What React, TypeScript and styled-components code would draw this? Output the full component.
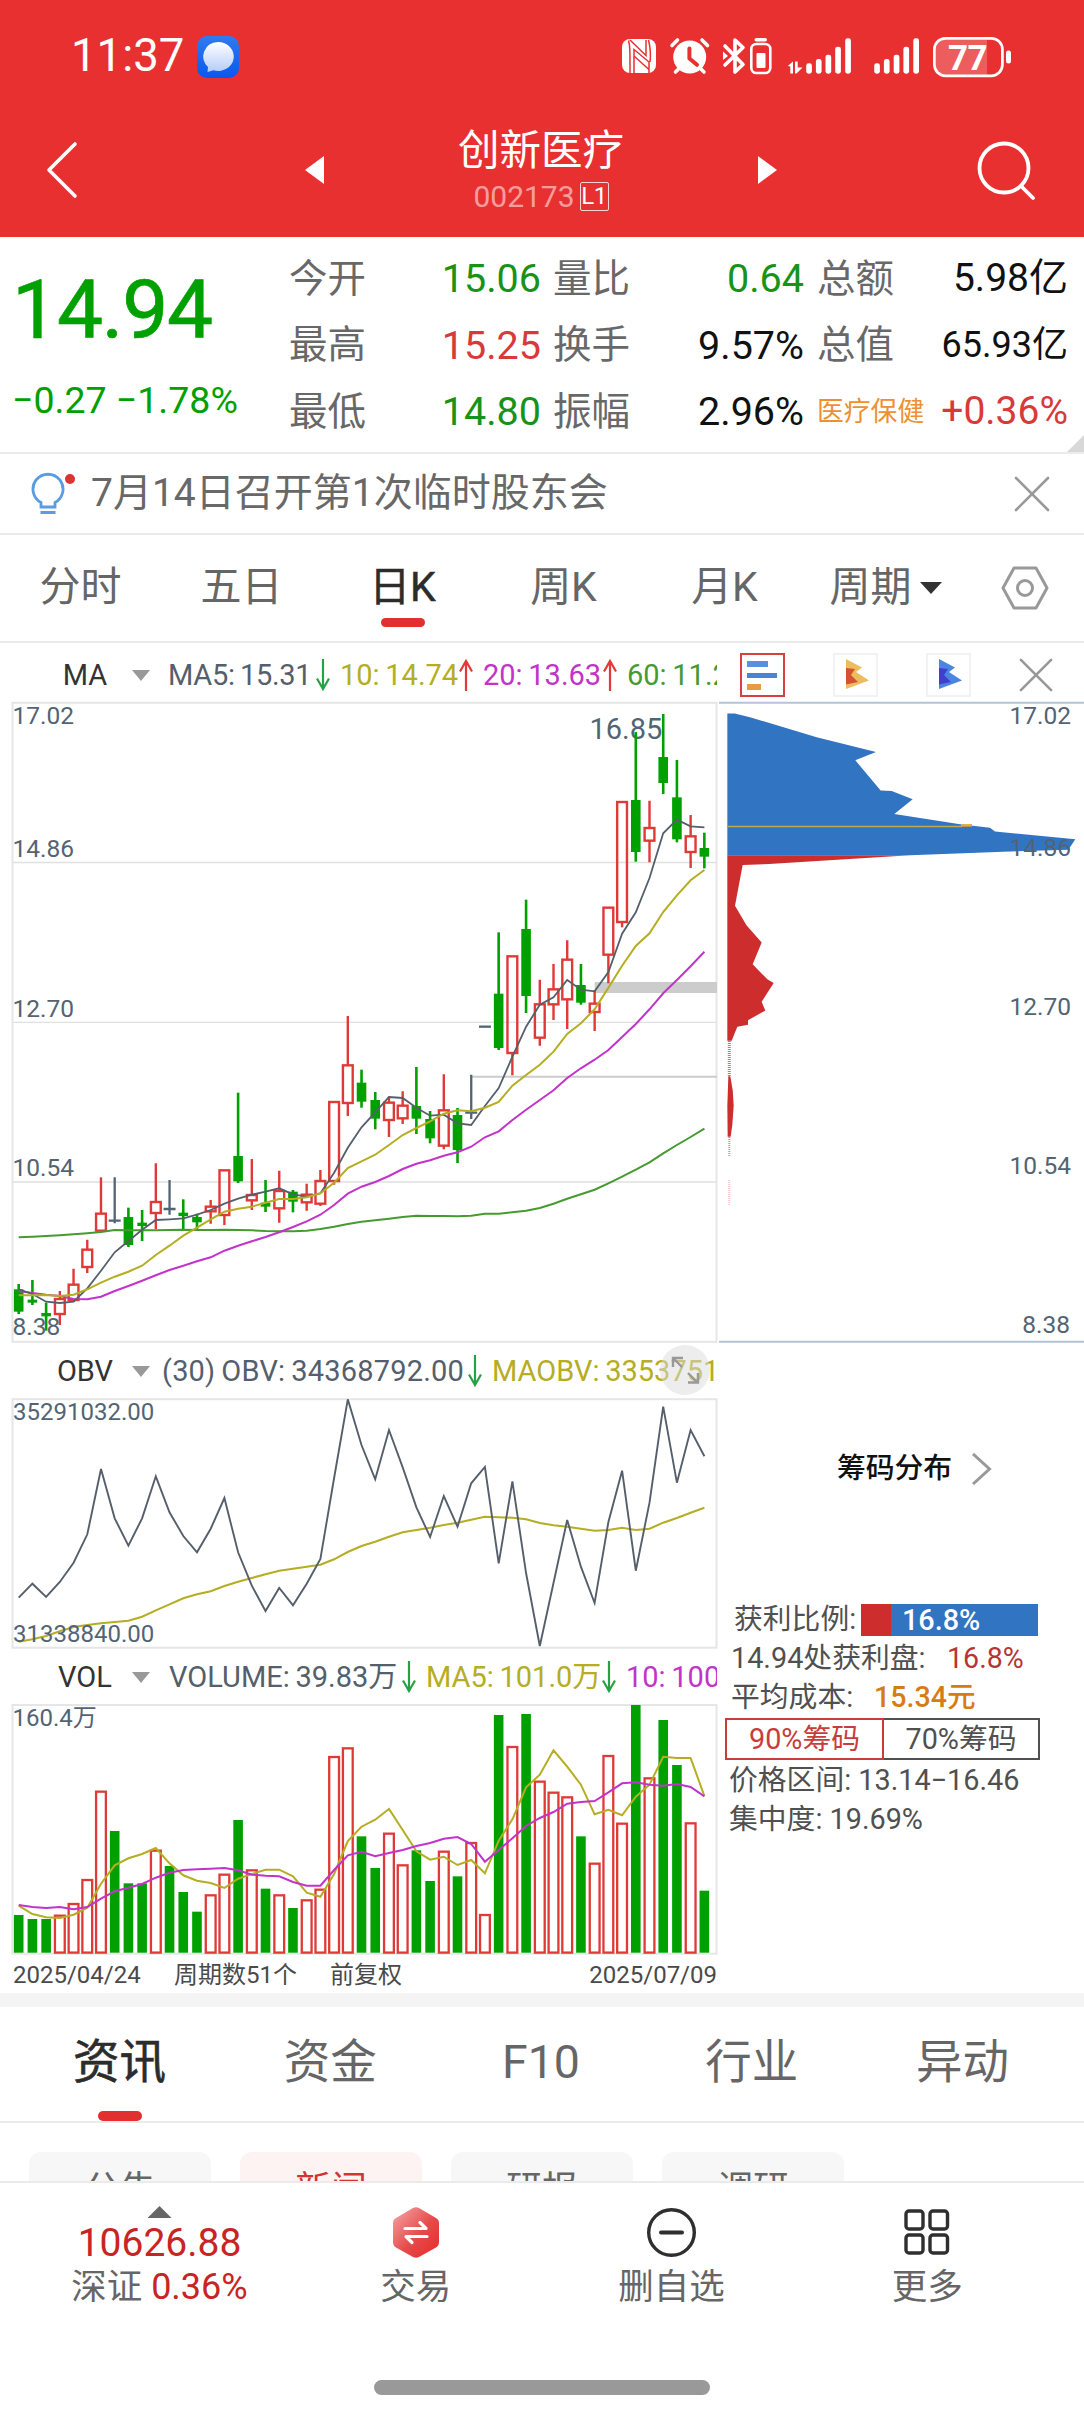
import React from "react";
import styled, { createGlobalStyle, css } from "styled-components";

const C = {
  red: "#e83030",
  up: "#e03a36",
  down: "#00a000",
  slate: "#555f6b",
  axis: "#526474",
  olive: "#b5ad22",
  magenta: "#c233cb",
  green: "#479a30",
  line: "#ebebeb",
  gray: "#666",
};

const FONT = `Roboto, "Noto Sans CJK SC", sans-serif`;

const Global = createGlobalStyle`
  * { box-sizing: border-box; }
  body { margin: 0; background: #fff; font-family: ${FONT}; line-height: 1.2; }
  svg { display: block; flex: none; }
`;

const Page = styled.div`
  width: 1084px;
  height: 2412px;
  display: flex;
  flex-direction: column;
  overflow: hidden;
  background: #fff;
`;

const Text = styled.span<{ $s: number; $c?: string; $w?: number; $ls?: number }>`
  font-size: ${(p) => p.$s}px;
  color: ${(p) => p.$c ?? "inherit"};
  font-weight: ${(p) => p.$w ?? 400};
  letter-spacing: ${(p) => p.$ls ?? 0}px;
  line-height: 1.2;
  white-space: pre;
`;

/* ---------- red top area ---------- */
const Top = styled.header`
  height: 237px;
  background: ${C.red};
  color: #fff;
  flex: none;
`;
const StatusBar = styled.div`
  height: 113px;
  padding: 0 73px 0 71px;
  display: flex;
  align-items: center;
  justify-content: space-between;
`;
const Clock = styled.div`
  display: flex;
  align-items: center;
  gap: 13px;
`;
const TitleBar = styled.div`
  height: 124px;
  display: flex;
  align-items: center;
  padding: 0 48px 10px 46px;
`;
const Title = styled.div`
  width: 434px;
  display: flex;
  flex-direction: column;
  align-items: center;
`;
const CodeRow = styled.div`
  display: flex;
  align-items: center;
  gap: 5px;
  height: 34px;
  margin-top: 4px;
`;
const LevelTag = styled.span`
  width: 29px;
  height: 29px;
  border: 1.5px solid rgba(255, 255, 255, 0.8);
  border-radius: 2px;
  font-size: 24px;
  line-height: 27px;
  text-align: center;
  letter-spacing: -0.5px;
`;
const Previous = styled.div`
  flex: none;
  margin-left: 227px;
`;
const Search = styled.div`
  margin-left: auto;
`;

/* ---------- quote ---------- */
const Quote = styled.section`
  height: 217px;
  flex: none;
  display: flex;
  position: relative;
  border-bottom: 2px solid ${C.line};
`;
const PriceBox = styled.div`
  width: 289px;
  padding: 25px 0 0 12px;
  color: ${C.down};
`;
const BigPrice = styled.div`
  font-size: 82px;
  line-height: 96px;
  letter-spacing: -1.2px;
  -webkit-text-stroke: 0.7px ${C.down};
`;
const Change = styled.div`
  margin-top: 20px;
  font-size: 37.5px;
  line-height: 44px;
  white-space: pre;
`;
const Stats = styled.div`
  display: grid;
  grid-template-columns: 77px 175px 12px 77px 174px 13px 108px 143px;
  grid-template-rows: repeat(3, 66.5px);
  align-items: center;
  padding-top: 8px;
`;
const Label = styled.span<{ $s?: number; $c?: string; $col: number; $up?: number }>`
  grid-column: ${(p) => p.$col};
  font-size: ${(p) => p.$s ?? 38.5}px;
  color: ${(p) => p.$c ?? "#686868"};
  line-height: 1.2;
  padding-top: 1px;
  white-space: nowrap;
`;
const Value = styled(Label)`
  justify-self: end;
`;
const Corner = styled.i`
  position: absolute;
  right: 0;
  bottom: 0;
  border-style: solid;
  border-width: 0 0 17px 17px;
  border-color: transparent transparent #d8d8d8 transparent;
`;

/* ---------- notice and period tabs ---------- */
const Notice = styled.section`
  height: 81px;
  flex: none;
  border-bottom: 2px solid ${C.line};
  display: flex;
  align-items: center;
  padding: 0 34px 0 30px;
`;
const NoticeText = styled.div`
  flex: 1;
  margin-left: 12px;
  font-size: 39px;
  color: #686868;
`;
const Periods = styled.nav`
  height: 108px;
  flex: none;
  display: grid;
  grid-template-columns: repeat(6, 161px) 1fr;
  border-bottom: 2px solid ${C.line};
`;
const Period = styled.div<{ $on?: boolean }>`
  display: flex;
  align-items: center;
  justify-content: center;
  position: relative;
  font-size: 41px;
  color: ${(p) => (p.$on ? "#2c2c2c" : C.gray)};
  ${(p) =>
    p.$on &&
    css`
      -webkit-text-stroke: 0.5px #2c2c2c;
      &::after {
        content: "";
        position: absolute;
        left: 59px;
        bottom: 14px;
        width: 44px;
        height: 9px;
        border-radius: 5px;
        background: #e23030;
      }
    `}
`;
const Caret = styled.i<{ $w: number; $h: number; $c: string; $ml?: number }>`
  width: 0;
  height: 0;
  margin-left: ${(p) => p.$ml ?? 0}px;
  border-style: solid;
  border-width: ${(p) => p.$h}px ${(p) => p.$w / 2}px 0;
  border-color: ${(p) => p.$c} transparent transparent;
`;

/* ---------- charts ---------- */
const ChartArea = styled.section`
  display: flex;
  height: 1350px;
  flex: none;
`;
const Left = styled.div`
  width: 719px;
  display: flex;
  flex-direction: column;
`;
const Right = styled.div`
  width: 365px;
  display: flex;
  flex-direction: column;
`;
const IndicatorRow = styled.div<{ $h: number; $pt?: number }>`
  height: ${(p) => p.$h}px;
  padding-top: ${(p) => p.$pt ?? 0}px;
  width: 717px;
  display: flex;
  align-items: center;
  overflow: hidden;
  position: relative;
  flex: none;
`;
const IndicatorName = styled.span`
  width: 80px;
  margin: 0 7px 0 45px;
  text-align: center;
  font-size: 29px;
  color: #333;
  flex: none;
`;
const Item = styled.span<{ $c: string; $w: number; $ls?: number; $pl?: number }>`
  width: ${(p) => p.$w}px;
  flex: none;
  display: flex;
  align-items: center;
  justify-content: space-between;
  padding: 0 10px 0 ${(p) => p.$pl ?? 0}px;
  color: ${(p) => p.$c};
  font-size: 29px;
  word-spacing: -1.5px;
  letter-spacing: ${(p) => p.$ls ?? 0}px;
  white-space: pre;
`;
const Expand = styled.div`
  position: absolute;
  left: 660px;
  top: 3px;
  width: 50px;
  height: 50px;
  border-radius: 50%;
  background: rgba(220, 220, 220, 0.5);
`;
const Dates = styled.div`
  height: 39px;
  padding: 4px 2px 0 13px;
  display: grid;
  grid-template-columns: 161px 156px 1fr auto;
  align-items: center;
  font-size: 24px;
  color: #4a4a4a;
`;

const ToolRow = styled.div`
  height: 58px;
  display: flex;
  align-items: center;
  padding: 6px 0 0 21px;
  flex: none;
`;
const Tool = styled.div<{ $on?: boolean }>`
  width: 45px;
  height: 44px;
  margin-right: 48px;
  border: 2px solid ${(p) => (p.$on ? "#d84040" : "#f2f2f2")};
  flex: none;
`;
const ChipTitle = styled.div`
  height: 250px;
  display: flex;
  align-items: center;
  justify-content: center;
  gap: 20px;
  font-size: 28.8px;
  font-weight: 500;
  color: #111;
  padding: 3px 0 0 26px;
`;
const ChipInfo = styled.div`
  display: flex;
  flex-direction: column;
  padding: 8px 0 0 6px;
  font-size: 28.8px;
  color: #505050;
`;
const InfoRow = styled.div<{ $pl?: number }>`
  height: 39px;
  padding-left: ${(p) => p.$pl ?? 6}px;
  display: flex;
  align-items: center;
  white-space: pre;
`;
const InfoLabel = styled.span<{ $w: number }>`
  width: ${(p) => p.$w}px;
`;
const Ratio = styled.div`
  width: 177px;
  height: 32px;
  background: linear-gradient(90deg, #cd2d2d 30px, #3174c2 30px);
  color: #fff;
  font-weight: 500;
  line-height: 32px;
  padding-left: 41px;
`;
const Segments = styled.div`
  display: flex;
  height: 42px;
  margin: 1px 0 1px;
`;
const Segment = styled.div<{ $on?: boolean }>`
  width: ${(p) => (p.$on ? 159 : 156)}px;
  border: 2px solid ${(p) => (p.$on ? "#c93c3c" : "#505050")};
  border-left-width: ${(p) => (p.$on ? 2 : 0)}px;
  color: ${(p) => (p.$on ? "#c93c3c" : "#505050")};
  display: flex;
  align-items: center;
  justify-content: center;
`;

/* ---------- lower tabs ---------- */
const Strip = styled.div`
  height: 14px;
  flex: none;
  background: #f4f4f4;
`;
const Tabs = styled.nav`
  height: 116px;
  flex: none;
  padding: 0 16px 0 14px;
  display: grid;
  grid-template-columns: repeat(5, 1fr);
  border-bottom: 2px solid ${C.line};
`;
const Tab = styled.div<{ $on?: boolean }>`
  position: relative;
  text-align: center;
  line-height: 111px;
  font-size: 46.5px;
  color: ${(p) => (p.$on ? "#2c2c2c" : C.gray)};
  ${(p) =>
    p.$on &&
    css`
      -webkit-text-stroke: 0.6px #2c2c2c;
      &::after {
        content: "";
        position: absolute;
        left: 84px;
        bottom: 0;
        width: 44px;
        height: 10px;
        border-radius: 5px;
        background: #e23030;
      }
    `}
`;
const Pills = styled.div`
  height: 58px;
  flex: none;
  padding: 29px 29px 0;
  display: flex;
  gap: 29px;
  overflow: hidden;
`;
const Pill = styled.div<{ $on?: boolean }>`
  width: 182px;
  height: 74px;
  line-height: 76px;
  border-radius: 12px;
  text-align: center;
  font-size: 36px;
  background: ${(p) => (p.$on ? "#fdf3f2" : "#f7f7f7")};
  color: ${(p) => (p.$on ? "#d03434" : C.gray)};
`;
const BottomNav = styled.footer`
  height: 232px;
  flex: none;
  border-top: 2px solid ${C.line};
  display: flex;
  flex-direction: column;
  background: #fff;
`;
const NavItems = styled.div`
  height: 197px;
  padding: 23px 29px 0 31px;
  display: grid;
  grid-template-columns: 257px repeat(3, 1fr);
`;
const NavItem = styled.div`
  display: flex;
  flex-direction: column;
  align-items: center;
  font-size: 35.5px;
  color: ${C.gray};
`;
const NavIcon = styled.div`
  height: 52px;
  margin-bottom: 8px;
  display: flex;
  align-items: center;
`;
const UpMark = styled.i`
  width: 24px;
  height: 12px;
  background: #666;
  clip-path: polygon(50% 0, 100% 100%, 0 100%);
`;
const IndexValue = styled.div`
  margin-top: 2px;
  font-size: 39px;
  line-height: 46px;
  color: #c92424;
`;
const NavLabel = styled.div`
  line-height: 42px;
  white-space: pre;
`;
const HomeBar = styled.div`
  width: 336px;
  height: 15px;
  border-radius: 8px;
  background: #999;
  margin: 0 auto;
`;

/* ---------- data ---------- */
type Kind = "r" | "g" | "n";
type Candle = [Kind, number, number, number, number];
const X = (i: number) => 18.7 + i * 13.713;

const block = (base: number, rows: Candle[]): Candle[] =>
  rows.map(([k, ...v]) => [k, ...v.map((n) => base + n / 3)] as Candle);

const candles: Candle[] = [
  ...block(990, [
    ["g", 882, 898, 965, 972], ["g", 870, 929, 938, 945], ["g", 938, 969, 979, 1022],
    ["r", 903, 927, 972, 1005], ["r", 836, 884, 930, 936], ["r", 749, 779, 831, 849],
    ["r", 562, 671, 722, 722], ["n", 562, 692, 692, 700], ["g", 653, 681, 765, 771],
    ["g", 660, 698, 708, 753], ["r", 520, 636, 669, 717], ["n", 570, 657, 657, 674],
    ["g", 628, 668, 678, 722], ["g", 671, 681, 697, 722], ["r", 630, 650, 664, 701],
    ["r", 541, 541, 675, 705], ["g", 308, 498, 574, 579], ["r", 507, 615, 631, 660],
    ["g", 570, 638, 650, 666], ["r", 542, 603, 655, 698], ["g", 600, 605, 635, 667],
    ["r", 581, 614, 637, 662], ["r", 540, 573, 641, 648], ["r", 336, 336, 573, 584],
    ["r", 78, 226, 339, 378], ["g", 239, 278, 335, 353],
  ]),
  ...block(1000, [
    ["g", 276, 300, 356, 388], ["r", 290, 308, 360, 411], ["r", 274, 317, 355, 372],
    ["g", 201, 318, 356, 402], ["g", 333, 357, 415, 430], ["r", 223, 331, 437, 448],
    ["g", 324, 345, 450, 489], ["n", 224, 338, 338, 357], ["n", 80, 80, 80, 80],
  ]),
  ...block(690, [
    ["g", 727, 911, 1074, 1080], ["r", 799, 799, 1089, 1156], ["g", 629, 717, 918, 969],
    ["r", 869, 943, 1043, 1067], ["r", 822, 898, 943, 990], ["r", 751, 809, 928, 1017],
    ["g", 822, 885, 938, 944], ["r", 900, 941, 966, 1023], ["r", 653, 653, 794, 880],
    ["r", 336, 336, 696, 712], ["g", 126, 330, 486, 515], ["r", 332, 414, 452, 517],
    ["g", 72, 201, 279, 312], ["g", 210, 322, 448, 457], ["r", 375, 439, 486, 534],
    ["g", 428, 474, 500, 535],
  ]),
];

const seg = (base: number, v: number[]) => v.map((n) => base + n / 3);
const ma5 = [
  ...seg(990, [898, 912, 935, 939, 935, 895, 842, 787, 753, 719, 690, 688, 685, 674, 660, 641, 626, 614, 605, 595, 613, 620, 610, 548, 473, 412]),
  ...seg(1000, [337, 291, 294, 323, 347, 344, 370, 375, 318, 264]),
  ...seg(690, [1100, 1010, 944, 922, 870, 899, 904, 846, 731, 667, 564, 430, 389, 409, 412]),
];
const ma10 = [
  ...seg(990, [916, 916, 915, 918, 914, 898, 878, 860, 845, 827, 795, 767, 737, 713, 688, 665, 656, 650, 638, 627, 627, 622, 610, 578]),
  ...seg(1000, [504, 484, 464, 435, 405, 384, 364, 341, 331, 334, 323, 306, 257]),
  ...seg(690, [1155, 1124, 1085, 1032, 1000, 958, 893, 827, 768, 730, 666, 616, 571, 540]),
];
const ma20 = [
  ...seg(990, [903, 909, 914, 918, 927, 928, 920, 903, 888, 872, 856, 840, 827, 814, 802, 782, 767, 754, 741, 727, 711, 694, 674, 645]),
  ...seg(1000, [581, 560, 546, 528, 507, 491, 481, 467, 457, 440, 412, 394, 360, 329, 300, 271, 234, 205, 179, 150, 111]),
  ...seg(690, [1002, 958, 910, 870, 829, 785]),
];
const ma60 = [
  ...seg(990, [742, 740, 738, 736, 733, 730, 726, 720, 721, 721, 721, 720, 719, 720, 720, 719, 720, 721, 723, 724, 724, 722, 717, 710]),
  ...seg(1000, [672, 665, 661, 656, 651, 647, 648, 648, 649, 647, 641, 641, 637, 632, 624, 611, 596, 583, 569, 550, 530, 509, 487, 460, 435, 411, 386]),
];
const obv = seg(1340, [773, 731, 771, 726, 668, 583, 387, 535, 617, 535, 409, 517, 588, 637, 566, 474, 637, 737, 813, 744, 796, 731, 657, 414, 178, 315, 418, 270, 382, 502, 591, 468, 560, 430, 381, 670, 424, 700, 918, 729, 540, 680, 789, 546, 392, 692, 488, 200, 428, 270, 349]);
const maobv = seg(1340, [905, 898, 888, 874, 861, 855, 850, 846, 842, 830, 811, 793, 775, 763, 754, 738, 725, 714, 703, 692, 686, 680, 674, 658, 636, 618, 605, 590, 577, 570, 563, 555, 548, 539, 530, 532, 533, 538, 549, 556, 560, 566, 572, 570, 563, 570, 566, 548, 534, 518, 503]);
const volume = "g825 g837 g837 r827 r792 r720 r455 g573 g730 g730 r632 g678 g756 g815 r766 r704 g540 r691 g746 r766 g804 r781 r749 r351 r325 g589 g684 r581 r676 g631 g723 r635 g709 r609 r825 g225 r321 g222 r425 r458 r472 g589 r671 r348 r551 g195 r415 g240 g375 r550 g752".split(" ");
const vma5 = seg(1640, [797, 822, 832, 834, 824, 803, 731, 676, 655, 642, 624, 670, 706, 722, 729, 744, 716, 702, 689, 689, 709, 758, 770, 702, 603, 560, 539, 507, 570, 634, 659, 650, 675, 660, 700, 602, 538, 442, 404, 331, 380, 434, 523, 509, 526, 470, 434, 350, 354, 354, 468]);
const vma10 = seg(1640, [795, 801, 804, 801, 808, 801, 776, 754, 743, 732, 713, 698, 690, 688, 686, 684, 691, 704, 707, 709, 726, 737, 737, 690, 646, 635, 649, 639, 630, 618, 609, 596, 591, 612, 665, 630, 595, 558, 534, 516, 491, 486, 483, 457, 430, 427, 434, 437, 432, 441, 469]);

const Line = ({ d, c, w = 2 }: { d: number[]; c: string; w?: number }) => (
  <polyline points={d.map((y, i) => `${X(i).toFixed(1)},${y.toFixed(1)}`).join(" ")} fill="none" stroke={c} strokeWidth={w} />
);
const AxisText = ({ x, y, s = 24.5, end, children }: { x: number; y: number; s?: number; end?: boolean; children: React.ReactNode }) => (
  <text x={x} y={y} fontSize={s} fill={C.axis} textAnchor={end ? "end" : "start"}>{children}</text>
);
const Frame = ({ y, h }: { y: number; h: number }) => (
  <rect x="12.5" y={y} width="704" height={h} fill="none" stroke="#e6e6e6" strokeWidth="2" />
);

const Trend = ({ up }: { up?: boolean }) => (
  <svg width="14" height="32" viewBox="0 0 14 32" fill="none" stroke={up ? "#e03a36" : "#28a048"} strokeWidth="2.2">
    {up ? <path d="M7 32V3M1 12.5 7 2l6 10.5" /> : <path d="M7 0v29M1 19.5 7 30l6-10.5" />}
  </svg>
);

const PriceChart = () => (
  <svg width="719" height="639" viewBox="0 703 719 639" overflow="visible">
    <g stroke="#e0e0e0" strokeWidth="1.3">
      <path d="M12 862.5H717M12 1022.3H717M12 1182H717" />
    </g>
    <Frame y={702.8} h={639} />
    <rect x="594.7" y="982" width="122.3" height="11" fill="#ccc" />
    <path d="M471 1076.7H717" stroke="#ccc" strokeWidth="2" />
    <AxisText x={12.5} y={724}>17.02</AxisText>
    <AxisText x={12.5} y={857}>14.86</AxisText>
    <AxisText x={12.5} y={1016.7}>12.70</AxisText>
    <AxisText x={12.5} y={1175.5}>10.54</AxisText>
    <AxisText x={589.5} y={738.5} s={29}>16.85</AxisText>
    {candles.map(([k, hi, t, b, lo], i) => {
      const x = X(i);
      if (k === "n")
        return <path key={i} d={`M${x} ${hi}V${lo}M${x - 6} ${t}H${x + 6}`} stroke={C.axis} strokeWidth="2.3" />;
      if (k === "g")
        return (
          <g key={i} fill={C.down}>
            <rect x={x - 1.3} y={hi} width="2.6" height={lo - hi} />
            <rect x={x - 4.8} y={t} width="9.6" height={b - t} />
          </g>
        );
      return (
        <g key={i} stroke={C.up} strokeWidth="2.4" fill="none">
          <path d={`M${x} ${hi}V${t}M${x} ${b}V${lo}`} />
          <rect x={x - 4.9} y={t} width="9.8" height={b - t} />
        </g>
      );
    })}
    <AxisText x={12.5} y={1335.3}>8.38</AxisText>
    <Line d={ma60} c={C.green} />
    <Line d={ma20} c={C.magenta} />
    <Line d={ma5} c={C.slate} w={1.8} />
    <Line d={ma10} c={C.olive} />
  </svg>
);

const ObvChart = () => (
  <svg width="719" height="249" viewBox="0 1399 719 249" overflow="visible">
    <Frame y={1399.2} h={248.5} />
    <AxisText x={13} y={1419.7} s={24}>35291032.00</AxisText>
    <Line d={maobv} c={C.olive} w={2} />
    <Line d={obv} c={C.slate} w={1.9} />
    <AxisText x={13} y={1641.7} s={24}>31338840.00</AxisText>
  </svg>
);

const VolumeChart = () => (
  <svg width="719" height="249" viewBox="0 1705 719 249" overflow="visible">
    <Frame y={1705} h={248.7} />
    <AxisText x={12.5} y={1725.5} s={24}>160.4万</AxisText>
    {volume.map((v, i) => {
      const y = 1640 + Number(v.slice(1)) / 3;
      const x = X(i);
      return v[0] === "g" ? (
        <rect key={i} x={x - 4.8} y={y} width="9.6" height={1952.7 - y} fill={C.down} />
      ) : (
        <rect key={i} x={x - 4.9} y={y} width="9.8" height={1952.6 - y} fill="#fff" stroke={C.up} strokeWidth="2.3" />
      );
    })}
    <Line d={vma5} c={C.olive} />
    <Line d={vma10} c={C.magenta} />
  </svg>
);

const ChipChart = () => (
  <svg width="365" height="641" viewBox="719 701 365 641" overflow="visible">
    <path d="M719 702.8H1084M719 1341.7H1084" stroke="#b4c4d6" strokeWidth="2" />
    <g transform="translate(700 640) scale(.33333 .45918)">
      <path fill="#3174c2" d="M82 160H104L150 168 350 212 528 244 466 262 542 328 575 329 638 347 583 379 785 402 870 409 885 417 1126 434 1105 457 910 461 630 469H82Z" />
      <path fill="#cd2d2d" d="M82 469H630L207 488 128 490 105 579 140 622 185 659 158 706 202 739 221 747 185 788 196 807 144 828V838L112 842 95 873H82Z" />
      <path fill="#cd2d2d" d="M85 950H91L98 980 101 1015 97 1055 92 1082H83L82 1015Z" />
    </g>
    <g stroke="#cd2d2d" strokeWidth="2" strokeDasharray="1 1">
      <path d="M729.3 1041V1076" strokeWidth="3" opacity=".7" />
      <path d="M729.3 1137V1156" opacity=".55" />
      <path d="M729.3 1180V1206" opacity=".25" />
    </g>
    <path d="M728 826.5H962" stroke="#c0a850" strokeWidth="1.4" />
    <path d="M961 825.4H972" stroke="#e0aa40" strokeWidth="2.6" />
    <AxisText x={1071} y={723.5} end>17.02</AxisText>
    <AxisText x={1071} y={855.5} end>14.86</AxisText>
    <AxisText x={1071} y={1014.5} end>12.70</AxisText>
    <AxisText x={1071} y={1173.7} end>10.54</AxisText>
    <AxisText x={1070} y={1332.5} end>8.38</AxisText>
  </svg>
);

/* ---------- icons ---------- */
const StatusIcons = () => (
  <svg width="390" height="44" viewBox="621 35 390 44" fill="#fff">
    <rect x="622" y="39" width="34" height="34" rx="8" />
    <path d="M630 40 646 55.5V40M628.5 40.5C630 45 630 50 630 73M634 73V49.500L649 62V73M634 56 649.500 70M650 62C651 54 650 46 648.500 40" stroke={C.red} strokeWidth="1.5" fill="none" />
    <circle cx="689.7" cy="57" r="16.5" />
    <path d="m672 45.5 5.5-5.5M707.5 45.5 702 40M675.5 72 680 67.5M704 72 699.5 67.5" stroke="#fff" strokeWidth="3.6" strokeLinecap="round" />
    <path d="M689.4 48.5V58.5L697 64.8" stroke={C.red} strokeWidth="4" strokeLinecap="round" strokeLinejoin="round" fill="none" />
    <path d="M725 46 743 64.5 735 72V40L743 47.5 725 65" stroke="#fff" strokeWidth="3.6" strokeLinejoin="round" strokeLinecap="round" fill="none" />
    <path d="M723 51.5 728 56 723 60Z" />
    <rect x="754.5" y="38" width="12.5" height="3.6" rx="1.8" />
    <rect x="751.3" y="44" width="19" height="29" rx="5" fill="none" stroke="#fff" strokeWidth="2.6" />
    <rect x="756.5" y="53" width="9" height="15" rx="1" />
    <path d="M787.8 66 793 61.5V73.5H790.3V66.5ZM795 61.5H797.7V67.5H802.5L796.5 73.5H795Z" />
    {[806.2, 815.9, 825.5, 835.2, 845.2, 874.2, 883.9, 893.7, 903.4, 913.3].map((x, i) => {
      const y = [63.3, 59, 54.7, 46.7, 38.3][i % 5];
      return <rect key={x} x={x} y={y} width="5.7" height={73.7 - y} rx="2.4" />;
    })}
    <path d="M945 39.5H987V75.5H945A9 9 0 0 1 935.5 66.5V48.5A9 9 0 0 1 945 39.5Z" opacity=".22" />
    <rect x="934.4" y="38.3" width="68" height="37.5" rx="11" fill="none" stroke="#fff" strokeWidth="2.7" />
    <rect x="1006" y="50.5" width="5" height="13" rx="2.5" />
    <text x="948" y="69.5" fontSize="35" fontWeight="700" letterSpacing="-.5">77</text>
  </svg>
);

const Cross = ({ s = 36, w = 2.6 }: { s?: number; w?: number }) => (
  <svg width={s} height={s} viewBox="0 0 36 36" stroke="#999" strokeWidth={w} strokeLinecap="round">
    <path d="M2 2 34 34M34 2 2 34" />
  </svg>
);

const ChipGlyph = ({ light, dark }: { light: string; dark: string }) => (
  <svg width="41" height="40" viewBox="0 0 41 40">
    <path d="M11 4 27 12.5 21 17 34 25.5 11 34Z" fill={light} />
    <path d="M11 13 20 14 16 20 23 27 11 29.5Z" fill={dark} />
  </svg>
);

export default function App() {
  return (
    <>
      <Global />
      <Page>
        <Top>
          <StatusBar>
            <Clock>
              <Text $s={45.5}>11:37</Text>
              <svg width="42" height="42" viewBox="0 0 42 42">
                <defs>
                  <linearGradient id="msg" x1="0" y1="0" x2="0" y2="1"><stop stopColor="#2f7bf0" /><stop offset="1" stopColor="#0b57ee" /></linearGradient>
                  <linearGradient id="bub" x1="0" y1="0" x2="0" y2="1"><stop stopColor="#fff" /><stop offset="1" stopColor="#b4ccfa" /></linearGradient>
                </defs>
                <rect width="42" height="42" rx="10" fill="url(#msg)" />
                <path d="M21 6A15.5 14.5 0 1 1 16.5 34.3L10.5 36 11 31A15.5 14.5 0 0 1 21 6Z" fill="url(#bub)" />
              </svg>
            </Clock>
            <StatusIcons />
          </StatusBar>
          <TitleBar>
            <svg width="32" height="60" viewBox="0 0 32 60" fill="none" stroke="#fff" strokeWidth="3.6" strokeLinecap="round" strokeLinejoin="round"><path d="M29 4 3 30 29 56" /></svg>
            <Previous>
              <svg width="19" height="28" viewBox="0 0 19 28" fill="#fff"><path d="M19 0V28L0 14Z" /></svg>
            </Previous>
            <Title>
              <Text $s={41.5}>创新医疗</Text>
              <CodeRow>
                <Text $s={30} $c="rgba(255,255,255,.55)">002173</Text>
                <LevelTag>L1</LevelTag>
              </CodeRow>
            </Title>
            <svg width="19" height="28" viewBox="0 0 19 28" fill="#fff"><path d="M0 0V28L19 14Z" /></svg>
            <Search>
              <svg width="59" height="60" viewBox="0 0 59 60" fill="none" stroke="#fff" strokeWidth="3.8" strokeLinecap="round"><circle cx="27" cy="28" r="24.5" /><path d="m44 46 12 12" /></svg>
            </Search>
          </TitleBar>
        </Top>

        <Quote>
          <PriceBox>
            <BigPrice>14.94</BigPrice>
            <Change>−0.27 −1.78%</Change>
          </PriceBox>
          <Stats>
            <Label $col={1}>今开</Label><Value $col={2} $s={39.5} $c="#189318">15.06</Value>
            <Label $col={4}>量比</Label><Value $col={5} $s={39.5} $c="#189318">0.64</Value>
            <Label $col={7}>总额</Label><Value $col={8} $s={39} $c="#111">5.98亿</Value>
            <Label $col={1}>最高</Label><Value $col={2} $s={39.5} $c="#d83a3a">15.25</Value>
            <Label $col={4}>换手</Label><Value $col={5} $s={39.5} $c="#111">9.57%</Value>
            <Label $col={7}>总值</Label><Value $col={8} $s={36} $c="#111">65.93亿</Value>
            <Label $col={1}>最低</Label><Value $col={2} $s={39.5} $c="#189318">14.80</Value>
            <Label $col={4}>振幅</Label><Value $col={5} $s={39.5} $c="#111">2.96%</Value>
            <Label $col={7} $s={26.8} $c="#ee9030">医疗保健</Label><Value $col={8} $s={39} $c="#d83a3a">+0.36%</Value>
          </Stats>
          <Corner />
        </Quote>

        <Notice>
          <svg width="49" height="44" viewBox="30 471 49 44" fill="none" stroke="#5b9be0" strokeWidth="2.8">
            <path d="M41 506V501.5A15 15 0 1 1 55 501.5V506ZM40.5 511.5H55.5" />
            <circle cx="70" cy="478" r="5" fill="#dd3333" stroke="none" />
          </svg>
          <NoticeText>7月14日召开第1次临时股东会</NoticeText>
          <Cross />
        </Notice>

        <Periods>
          <Period>分时</Period>
          <Period>五日</Period>
          <Period $on>日K</Period>
          <Period>周K</Period>
          <Period>月K</Period>
          <Period>周期<Caret $w={22} $h={12} $c="#333" $ml={8} /></Period>
          <Period>
            <svg width="48" height="46" viewBox="0 0 48 46" fill="none" stroke="#999" strokeWidth="3" strokeLinejoin="round"><path d="M13 3H35L46 23 35 43H13L2 23Z" /><circle cx="24" cy="23" r="7.5" /></svg>
          </Period>
        </Periods>

        <ChartArea>
          <Left>
            <IndicatorRow $h={60} $pt={4}>
              <IndicatorName>MA</IndicatorName>
              <Caret $w={19} $h={11} $c="#999" />
              <Item $c={C.slate} $w={190} $pl={18} $ls={-0.3}>MA5: 15.31<Trend /></Item>
              <Item $c={C.olive} $w={143}>10: 14.74<Trend up /></Item>
              <Item $c={C.magenta} $w={144}>20: 13.63<Trend up /></Item>
              <Item $c={C.green} $w={150}>60: 11.23</Item>
            </IndicatorRow>
            <PriceChart />
            <IndicatorRow $h={57} $pt={1}>
              <IndicatorName>OBV</IndicatorName>
              <Caret $w={19} $h={11} $c="#999" />
              <Item $c={C.slate} $w={342} $pl={12} $ls={0.2}>(30) OBV: 34368792.00<Trend /></Item>
              <Item $c={C.olive} $w={250}>MAOBV: 33537512.00</Item>
              <Expand>
                <svg width="50" height="50" viewBox="0 0 50 50" fill="none" stroke="#999" strokeWidth="2.4"><path d="M22 22 14 14M13 22V13H23M28 28 37 37M38 28V37.5H28" /></svg>
              </Expand>
            </IndicatorRow>
            <ObvChart />
            <IndicatorRow $h={57} $pt={1}>
              <IndicatorName>VOL</IndicatorName>
              <Caret $w={19} $h={11} $c="#999" />
              <Item $c={C.slate} $w={276} $pl={19}>VOLUME: 39.83万<Trend /></Item>
              <Item $c={C.olive} $w={200}>MA5: 101.0万<Trend /></Item>
              <Item $c={C.magenta} $w={150}>10: 100.6万</Item>
            </IndicatorRow>
            <VolumeChart />
            <Dates>
              <span>2025/04/24</span><span>周期数51个</span><span>前复权</span><span>2025/07/09</span>
            </Dates>
          </Left>
          <Right>
            <ToolRow>
              <Tool $on>
                <svg width="41" height="40" viewBox="0 0 41 40"><path fill="#5a90e2" d="M5 6H26V12H5Z" /><path fill="#4a84d4" d="M5 18H35V23H5Z" /><path fill="#e89c40" d="M5 29H19V35H5Z" /></svg>
              </Tool>
              <Tool><ChipGlyph light="#ebbd5e" dark="#d65032" /></Tool>
              <Tool><ChipGlyph light="#4a86e0" dark="#4040cc" /></Tool>
              <Cross s={34} w={2.8} />
            </ToolRow>
            <ChipChart />
            <ChipTitle>
              筹码分布
              <svg width="20" height="32" viewBox="0 0 20 32" fill="none" stroke="#999" strokeWidth="3"><path d="M1 1 17.5 16 1 31" /></svg>
            </ChipTitle>
            <ChipInfo>
              <InfoRow $pl={9}><InfoLabel $w={127}>获利比例:</InfoLabel><Ratio>16.8%</Ratio></InfoRow>
              <InfoRow><InfoLabel $w={216}>14.94处获利盘:</InfoLabel><Text $s={28.6} $c="#b83434">16.8%</Text></InfoRow>
              <InfoRow><InfoLabel $w={143}>平均成本:</InfoLabel><Text $s={28.6} $c="#d67c14" $w={500}>15.34元</Text></InfoRow>
              <Segments><Segment $on>90%筹码</Segment><Segment>70%筹码</Segment></Segments>
              <InfoRow $pl={4}>价格区间: 13.14−16.46</InfoRow>
              <InfoRow $pl={4}>集中度: 19.69%</InfoRow>
            </ChipInfo>
          </Right>
        </ChartArea>

        <Strip />
        <Tabs>
          <Tab $on>资讯</Tab><Tab>资金</Tab><Tab>F10</Tab><Tab>行业</Tab><Tab>异动</Tab>
        </Tabs>
        <Pills>
          <Pill>公告</Pill><Pill $on>新闻</Pill><Pill>研报</Pill><Pill>调研</Pill>
        </Pills>
        <BottomNav>
          <NavItems>
            <NavItem>
              <UpMark />
              <IndexValue>10626.88</IndexValue>
              <NavLabel>深证 <Text $s={36} $c="#c92424">0.36%</Text></NavLabel>
            </NavItem>
            <NavItem>
              <NavIcon>
                <svg width="46" height="51" viewBox="0 0 46 51">
                  <defs><linearGradient id="hex" x1="0" y1="0" x2="1" y2="1"><stop stopColor="#f5aaaa" /><stop offset=".55" stopColor="#e64a4a" /><stop offset="1" stopColor="#e62a2a" /></linearGradient></defs>
                  <path d="M20 1Q23 -.5 26 1L43 11Q46 12.5 46 16V35Q46 38.5 43 40.5L26 50Q23 51.5 20 50L3 40.5Q0 38.5 0 35V16Q0 12.5 3 11Z" fill="url(#hex)" />
                  <path d="M12 21.5H33L27 15.5M34 29.5H13L19 35.5" fill="none" stroke="#fff" strokeWidth="3.2" strokeLinecap="round" strokeLinejoin="round" />
                </svg>
              </NavIcon>
              <NavLabel>交易</NavLabel>
            </NavItem>
            <NavItem>
              <NavIcon>
                <svg width="49" height="49" viewBox="0 0 49 49" fill="none" stroke="#2f2f2f" strokeWidth="3.4" strokeLinecap="round"><circle cx="24.5" cy="24.5" r="22.8" /><path d="M14 24.5H35" strokeWidth="4" /></svg>
              </NavIcon>
              <NavLabel>删自选</NavLabel>
            </NavItem>
            <NavItem>
              <NavIcon>
                <svg width="46" height="46" viewBox="0 0 46 46" fill="none" stroke="#2f2f2f" strokeWidth="3.4"><rect x="2" y="2" width="17" height="18" rx="3" /><rect x="26" y="2" width="17.5" height="18" rx="3" /><rect x="2" y="26" width="17" height="18" rx="3" /><rect x="26" y="26" width="17.5" height="18" rx="3" /></svg>
              </NavIcon>
              <NavLabel>更多</NavLabel>
            </NavItem>
          </NavItems>
          <HomeBar />
        </BottomNav>
      </Page>
    </>
  );
}
